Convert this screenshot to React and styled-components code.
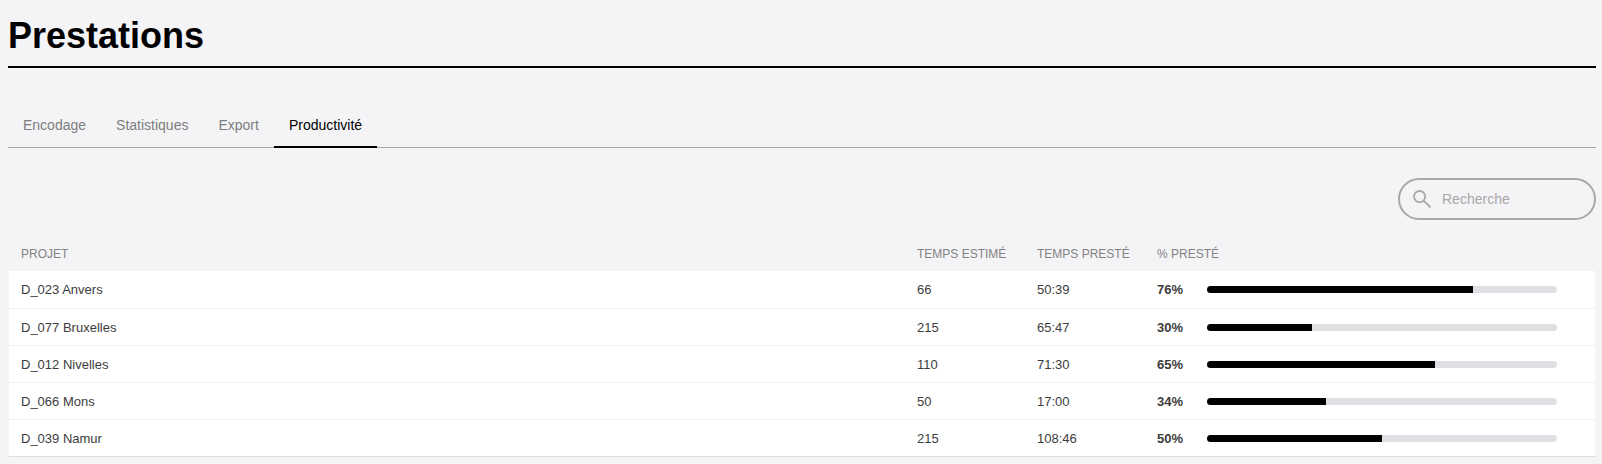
import React, { useState } from 'react';
import styled, { createGlobalStyle } from 'styled-components';

const GlobalStyle = createGlobalStyle`
  body {
    margin: 0;
    background-color: #f4f4f7;
    font-family: 'Liberation Sans', Arial, sans-serif;
    font-size: 14px;
    color: #000;
  }

  * {
    box-sizing: border-box;
  }
`;

const Page = styled.main`
  padding: 0 6px 6px 8px;
`;

const PageTitle = styled.h1`
  margin: 0;
  padding: 16px 0 10px;
  border-bottom: 2px solid #000;
  font-size: 36px;
  line-height: 40px;
  font-weight: 700;
`;

const TabList = styled.nav`
  display: flex;
  margin-top: 36px;
  border-bottom: 1px solid #a6a6a6;
`;

const Tab = styled.button`
  height: 44px;
  margin-bottom: -1px;
  padding: 0 15px;
  border: 0;
  border-bottom: 2px solid ${(props) => (props.$active ? '#000' : 'transparent')};
  background: none;
  font-family: inherit;
  font-size: 14px;
  color: ${(props) => (props.$active ? '#000' : '#7d7d7d')};
  cursor: pointer;
`;

const Toolbar = styled.div`
  display: flex;
  justify-content: flex-end;
  margin-top: 30px;
`;

const SearchBox = styled.label`
  display: flex;
  align-items: center;
  gap: 11px;
  width: 198px;
  height: 42px;
  padding: 0 13px;
  border: 2px solid #a8a8a8;
  border-radius: 21px;
  color: #a8a8a8;

  svg {
    flex: none;
  }
`;

const SearchInput = styled.input`
  flex: 1;
  min-width: 0;
  padding: 0;
  border: 0;
  outline: 0;
  background: none;
  font-family: inherit;
  font-size: 14px;
  color: #000;

  &::placeholder {
    color: #a8a8a8;
    opacity: 1;
  }
`;

const TableWrapper = styled.div`
  margin: 14px 1px 0;
`;

const Table = styled.table`
  width: 100%;
  table-layout: fixed;
  border-spacing: 0;
  border-bottom: 1px solid #dcdcdf;
`;

const HeadCell = styled.th`
  width: ${(props) => props.$width || 'auto'};
  height: 37px;
  padding: 2px 12px 0;
  font-size: 12px;
  font-weight: 400;
  text-align: left;
  text-transform: uppercase;
  white-space: nowrap;
  color: #828282;
`;

const Row = styled.tr`
  background-color: #fff;

  & + & td {
    border-top: 1px solid #f0f0f2;
  }
`;

const Cell = styled.td`
  height: 37px;
  padding: 0 12px;
  font-size: 13px;
  color: #3c3c3c;
`;

const Progress = styled.div`
  display: flex;
  align-items: center;
`;

const Percent = styled.strong`
  width: 50px;
`;

const Track = styled.div`
  width: 350px;
  height: 7px;
  border-radius: 4px;
  overflow: hidden;
  background-color: #e0dfe4;
`;

const Bar = styled.div`
  height: 100%;
  background-color: #000;
`;

const tabs = ['Encodage', 'Statistiques', 'Export', 'Productivité'];

const projects = [
  { name: 'D_023 Anvers', estimated: '66', spent: '50:39', percent: 76 },
  { name: 'D_077 Bruxelles', estimated: '215', spent: '65:47', percent: 30 },
  { name: 'D_012 Nivelles', estimated: '110', spent: '71:30', percent: 65 },
  { name: 'D_066 Mons', estimated: '50', spent: '17:00', percent: 34 },
  { name: 'D_039 Namur', estimated: '215', spent: '108:46', percent: 50 },
];

const SearchIcon = () => (
  <svg width="18" height="18" viewBox="0 0 18 18" fill="none" stroke="currentColor" strokeWidth="1.8" aria-hidden="true">
    <circle cx="6.6" cy="6.6" r="5.6" />
    <path d="M10.6 10.6 17.5 17.3" />
  </svg>
);

const App = () => {
  const [activeTab, setActiveTab] = useState('Productivité');
  const [search, setSearch] = useState('');

  const rows = projects.filter(({ name }) => name.toLowerCase().includes(search.toLowerCase()));

  return (
    <>
      <GlobalStyle />
      <Page>
        <PageTitle>Prestations</PageTitle>
        <TabList>
          {tabs.map((tab) => (
            <Tab key={tab} type="button" $active={tab === activeTab} onClick={() => setActiveTab(tab)}>
              {tab}
            </Tab>
          ))}
        </TabList>
        <Toolbar>
          <SearchBox htmlFor="search">
            <SearchIcon />
            <SearchInput
              id="search"
              type="text"
              placeholder="Recherche"
              aria-label="Recherche"
              value={search}
              onChange={(e) => setSearch(e.target.value)}
            />
          </SearchBox>
        </Toolbar>
        <TableWrapper>
          <Table>
            <thead>
              <tr>
                <HeadCell>Projet</HeadCell>
                <HeadCell $width="120px">Temps estimé</HeadCell>
                <HeadCell $width="120px">Temps presté</HeadCell>
                <HeadCell $width="450px">% presté</HeadCell>
              </tr>
            </thead>
            <tbody>
              {rows.map((row) => (
                <Row key={row.name}>
                  <Cell>{row.name}</Cell>
                  <Cell>{row.estimated}</Cell>
                  <Cell>{row.spent}</Cell>
                  <Cell>
                    <Progress>
                      <Percent>{row.percent}%</Percent>
                      <Track>
                        <Bar style={{ width: `${row.percent}%` }} />
                      </Track>
                    </Progress>
                  </Cell>
                </Row>
              ))}
            </tbody>
          </Table>
        </TableWrapper>
      </Page>
    </>
  );
};

export default App;
